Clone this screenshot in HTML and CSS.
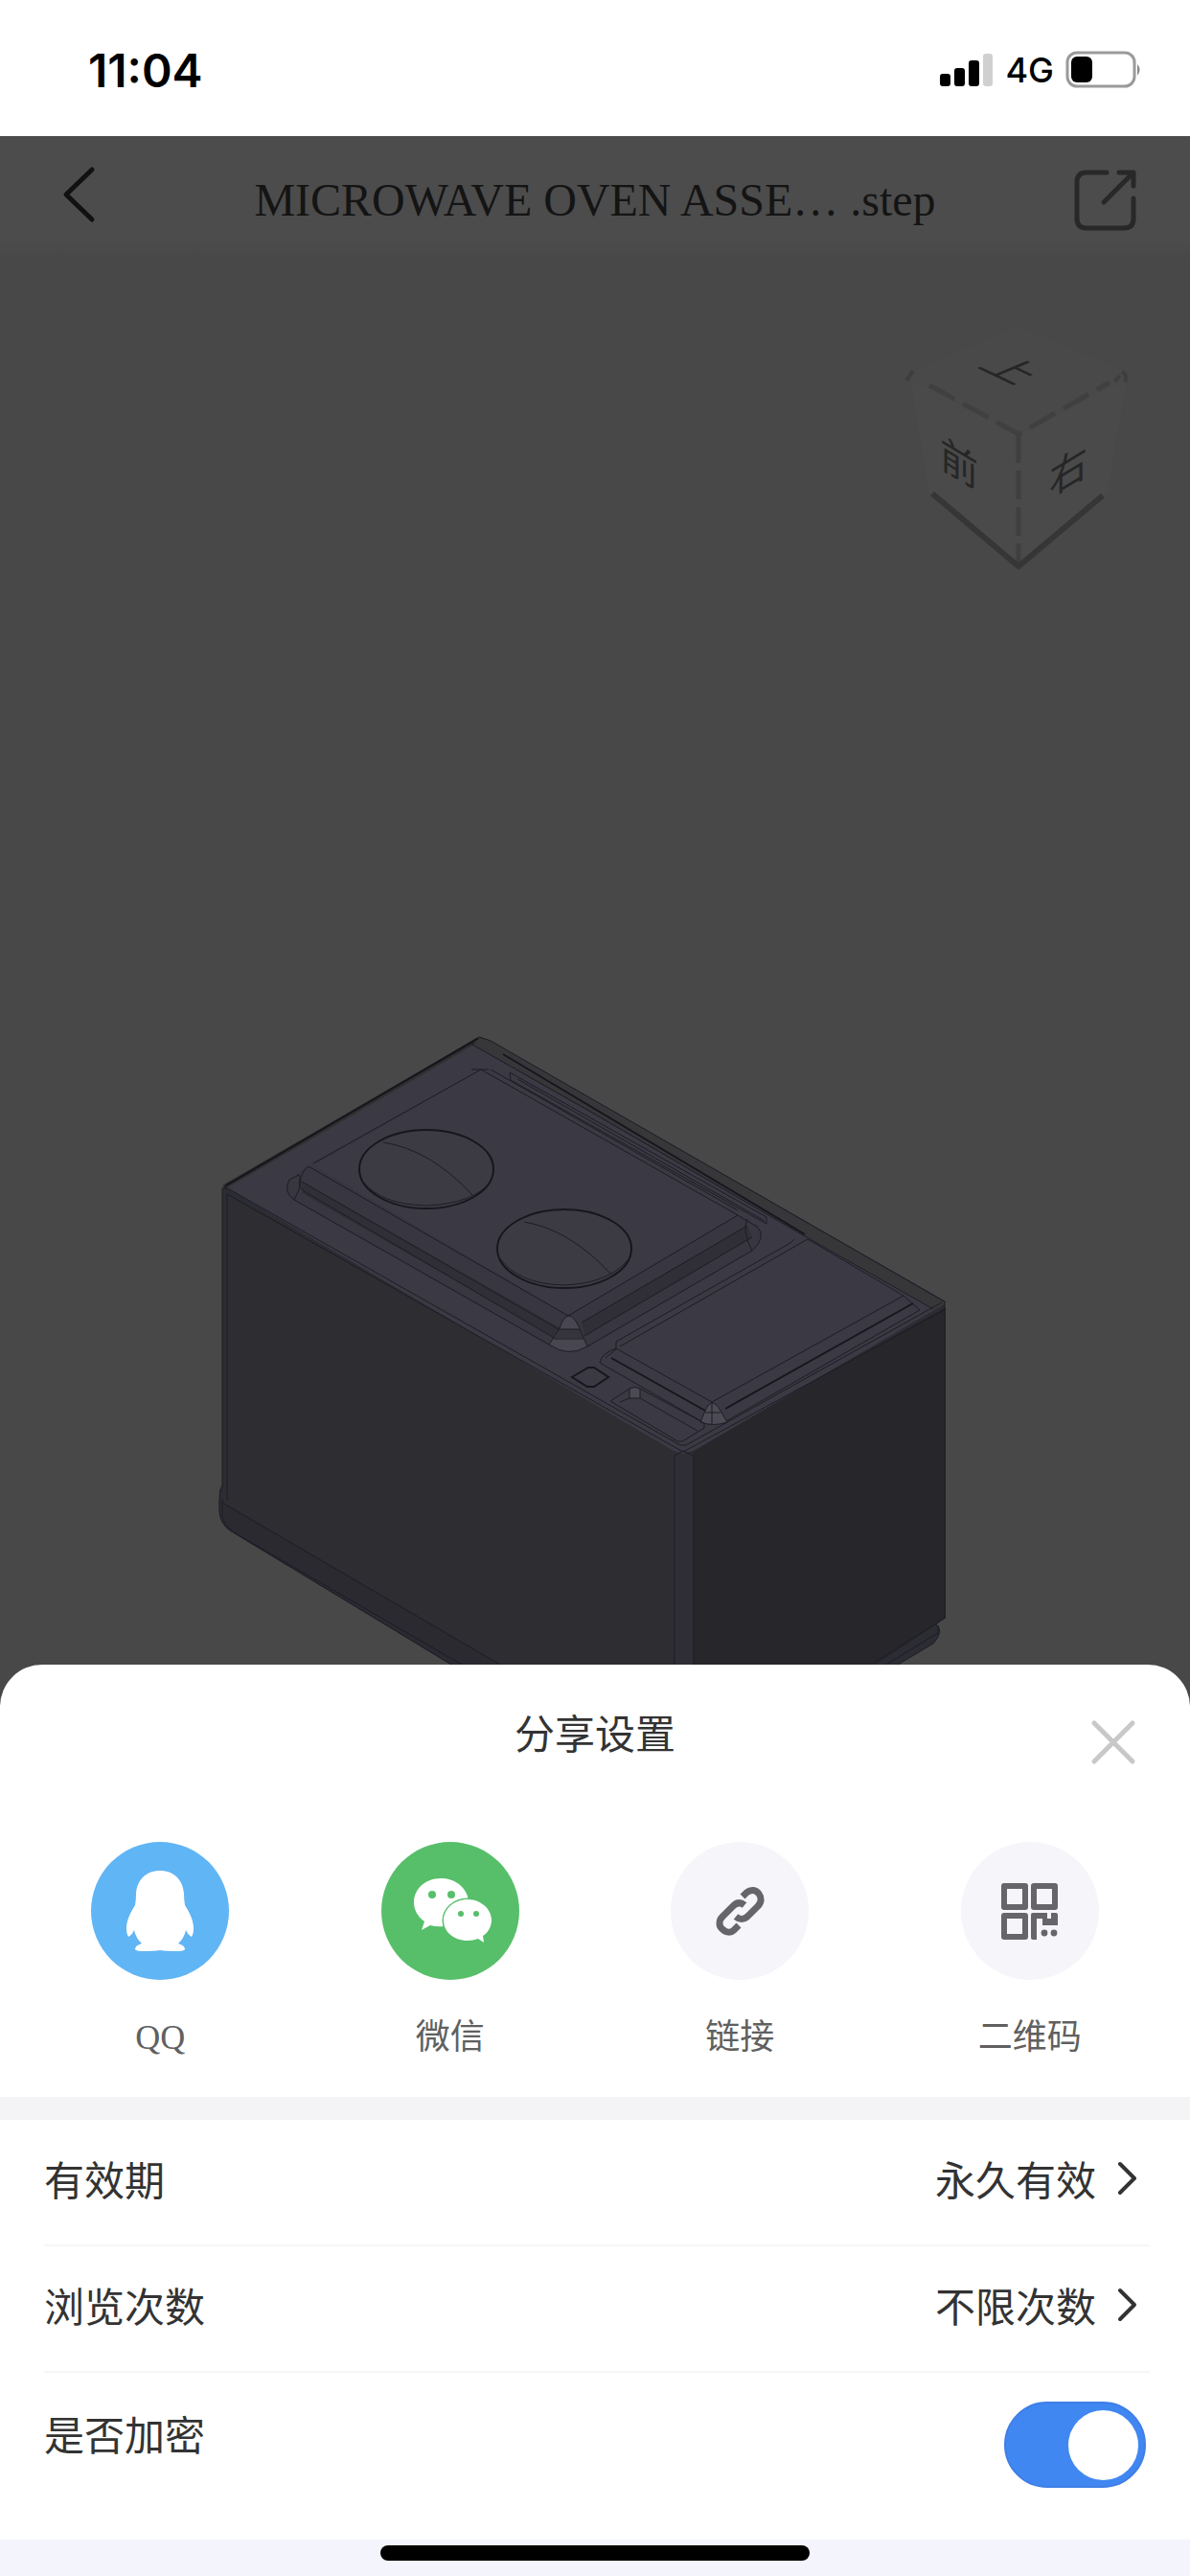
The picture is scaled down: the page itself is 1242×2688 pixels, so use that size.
FILE: index.html
```html
<!DOCTYPE html>
<html lang="zh-CN">
<head>
<meta charset="utf-8">
<meta name="viewport" content="width=device-width, initial-scale=1">
<title>分享设置</title>
<link rel="stylesheet" href="styles.css">
</head>
<body>
<div class="app">
  <div class="status">
    <span class="status-time">11:04</span>
    <div class="status-right">
      <svg class="signal" viewBox="0 0 56 36" aria-hidden="true">
        <rect x="0" y="22" width="11" height="13" rx="3"/>
        <rect x="15" y="16" width="11" height="19" rx="3"/>
        <rect x="30" y="8" width="11" height="27" rx="3"/>
        <rect x="45" y="1" width="10" height="34" rx="3" fill="#d0d0d0"/>
      </svg>
      <span class="status-net">4G</span>
      <svg class="battery" viewBox="0 0 80 40" aria-hidden="true">
        <rect x="2" y="2" width="70" height="35" rx="10" fill="none" stroke="#9a9a9a" stroke-width="3"/>
        <rect x="6" y="6" width="22" height="27" rx="6"/>
        <path d="M75 14q5 5 0 12z" fill="#8a8a8a"/>
      </svg>
    </div>
  </div>

  <main class="stage">
    <header class="topbar">
      <button class="icon-btn" type="button" aria-label="返回">
        <svg class="back" viewBox="0 0 36 60"><path d="M32 4 5 30l27 26" fill="none" stroke="#111" stroke-width="5" stroke-linecap="round" stroke-linejoin="round"/></svg>
      </button>
      <h1 class="file-name">MICROWAVE OVEN ASSE… .step</h1>
      <button class="icon-btn" type="button" aria-label="分享">
        <svg class="export" viewBox="0 0 68 68"><g fill="none" stroke="#282828" stroke-width="5" stroke-linecap="round" stroke-linejoin="round"><path d="M35 5H14Q4 5 4 15v38q0 10 10 10h39q10 0 10-10V32"/><path d="M32 36 61 7M48 5h15v14"/></g></svg>
      </button>
    </header>

    <svg class="model" viewBox="0 270 1242 1467" role="img" aria-label="微波炉三维模型">
      <g class="cube">
        <path d="M943 391 1063 340 1183 391 1063 453z" fill="#494949"/>
        <path d="M950 395 1063 453V592L970 514z M1176 395 1063 453V592L1156 514z" fill="#4a4a4a"/>
        <path d="M970 402 1063 453 1158 399" fill="none" stroke="#404040" stroke-width="5" stroke-dasharray="30 10"/>
        <path d="M1063 453V590" fill="none" stroke="#3f3f3f" stroke-width="5" stroke-dasharray="30 8"/>
        <path d="M973 515 1063 591 1151 517" fill="none" stroke="#363636" stroke-width="6" stroke-linejoin="round"/>
        <path d="m946 397 7-10M1163 398l6-6M1171 388q6 3 3 11" fill="none" stroke="#3e3e3e" stroke-width="4"/>
        <text class="face" transform="matrix(1.05 .5 -1.05 .44 1056 386)" y="15">上</text>
        <text class="face" transform="matrix(1 .6 0 1.05 1001 483)" y="15">前</text>
        <text class="face" transform="matrix(1 -.6 0 1.05 1115 491)" y="15">右</text>
      </g>

      <path d="M229 1555 232 1550V1240L500 1082 512 1086 986 1358V1688L977 1695Q985 1702 974 1715L937 1737H471L240 1597Q230 1590 229 1578z" fill="#2c2c33"/>
      <path d="M237 1246 713 1516V1737H471L240 1597 232 1568 237 1550z" fill="#2d2d32"/>
      <path d="M713 1516 987 1364V1688L914 1737H713z" fill="#26262b"/>
      <path d="M232 1568 522 1737H471L240 1597Q230 1590 232 1568z" fill="#2b2a31"/>
      <path d="M704 1516H724V1737H704z" fill="#2f2e36"/>
      <path d="M232 1237 500 1082 512 1086 987 1360 724 1514 713 1517 703 1514z" fill="#3b3943"/>
      <path d="M500 1082 512 1086 987 1360 975 1366 840 1290 493 1090z" fill="#37373a"/>
      <path d="M232 1237 500 1082 495 1090 238 1239z" fill="#30302f"/>

      <!-- raised hob panel -->
      <path d="M307 1252Q295 1243 302 1231L325 1214 502 1116 770 1268 790 1278Q801 1290 785 1305L613 1405Q593 1417 573 1403z" fill="#383640"/>
      <path d="M315 1233 587 1387 593 1396 580 1396 315 1245zM607 1380 780 1279 785 1291 610 1394z" fill="#302f38"/>
      <path d="M327 1216 502 1116 770 1268 593 1373z" fill="#3b3943"/>
      <path d="M584 1386Q593 1360 605 1386L613 1405Q593 1417 573 1403z" fill="#484650"/>
      <path d="M583 1387 605 1387 609 1396H579z" fill="#35343d"/>
      <ellipse cx="445" cy="1220" rx="70" ry="41" fill="#3c3b43"/>
      <ellipse cx="589" cy="1303" rx="70" ry="41" fill="#3c3b43"/>

      <!-- front corner facets of the small panel -->
      <path d="M736 1472Q743 1456 752 1472L759 1484Q744 1489 731 1484z" fill="#4c4a54"/>
      <path d="M657 1449Q662 1446 668 1449V1459H657z" fill="#4c4a54"/>

      <g class="edge">
        <path d="M232 1550V1240L500 1082 512 1086 986 1358V1688"/>
        <path d="M237 1550V1246L713 1515 987 1366"/>
        <path d="M234 1238 710 1508 716 1508 983 1359"/>
        <path d="M236 1242Q232 1236 240 1234L495 1087M493 1090 620 1162 840 1290 974 1366M493 1090Q492 1085 500 1084"/>
        <path d="M704 1737V1519L713 1514 724 1519V1737"/>
        <path d="M232 1550Q228 1556 229 1578 230 1590 240 1597L471 1737M232 1564V1582Q234 1592 244 1599L482 1737M232 1568 522 1737M237 1550V1566"/>
        <path d="M987 1688 914 1734M977 1695Q986 1702 974 1715L937 1737M979 1696V1704L925 1737"/>
        <path d="M327 1214 502 1116 770 1268 593 1373 327 1220Q320 1214 316 1224 308 1236 317 1243"/>
        <path d="M512 1116 770 1263M492 1116H510"/>
        <path d="M315 1233 583 1387M317 1243 580 1397M307 1252 573 1403Q593 1417 613 1405L785 1305Q801 1290 790 1280L770 1268"/>
        <path d="M307 1252Q295 1243 302 1231L312 1226Q318 1232 307 1252"/>
        <path d="M607 1380 780 1279M610 1394 785 1291M780 1272Q774 1285 785 1305"/>
        <path d="M573 1403 584 1386Q593 1360 605 1386L613 1405M583 1387H605M579 1397H609"/>
        <path d="M532 1119 800 1270V1277L533 1127z M540 1126 798 1274"/>
        <path d="M400 1192Q450 1200 493 1247M547 1275Q595 1283 638 1330"/>
        <path d="M643 1400 825 1297M647 1405 843 1293 943 1352 743 1463 643 1407Q628 1412 626 1422L732 1483"/>
        <path d="M825 1297 829 1293M943 1352 960 1367 758 1483M643 1400V1408L632 1417"/>
        <path d="M736 1472Q743 1456 752 1472L759 1484Q744 1489 731 1484zM736 1474H752M743 1463V1486"/>
        <path d="M637 1462 657 1449Q662 1446 668 1449L735 1485V1490L714 1503Q709 1506 704 1502zM647 1463 657 1459H668L728 1493M657 1449V1459M668 1449V1459"/>
      </g>
      <g class="edge edge-strong">
        <path d="M597 1437 614 1427H620L635 1437 620 1447H613z"/>
        <path d="M236 1237 498 1084M525 1100 840 1288"/>
        <path d="M638 1417 736 1472M757 1470 953 1360"/>
        <ellipse cx="445" cy="1220" rx="70" ry="41"/>
        <ellipse cx="589" cy="1303" rx="70" ry="41"/>
      </g>
      <path class="edge" d="M378 1232Q397 1257 445 1258 494 1256 512 1233M521 1312Q540 1340 589 1341 635 1339 655 1315"/>
    </svg>

    <section class="sheet" aria-labelledby="sheet-title">
      <div class="sheet-head">
        <h2 class="sheet-title" id="sheet-title">分享设置</h2>
        <button class="close" type="button" aria-label="关闭">
          <svg viewBox="0 0 48 48"><path d="M4 4 44 44M44 4 4 44" stroke="#c8c8c8" stroke-width="5" stroke-linecap="round"/></svg>
        </button>
      </div>

      <div class="targets">
        <button class="target" type="button">
          <svg class="target-icon" viewBox="0 0 144 144" aria-hidden="true">
            <circle cx="72" cy="72" r="72" fill="#60b5f5"/>
            <path d="M72 30C57 30 48 40 47 54Q47 60 46 66C41 74 37 82 37 90Q37 96 39 99 43 97 45 92 47 101 53 106 46 108 46 112 47 114 54 114 66 114 72 113 78 114 90 114 97 114 98 112 98 108 91 106 97 101 99 92 101 97 105 99 107 96 107 90C107 82 103 74 98 66Q97 60 97 54C96 40 87 30 72 30z" fill="#fff"/>
          </svg>
          <span class="target-label">QQ</span>
        </button>
        <button class="target" type="button">
          <svg class="target-icon" viewBox="0 0 144 144" aria-hidden="true">
            <circle cx="72" cy="72" r="72" fill="#57bf6a"/>
            <path d="M62 38C46 38 34 49 34 63 34 71 38 78 45 83L42 92 51 87Q58 89 66 88L91 60C88 46 76 38 62 38z" fill="#fff"/>
            <path d="M90 60C76 60 65 70 65 82S76 103 90 103Q96 103 101 101L107 105 106 98C112 94 115 88 115 82 115 70 104 60 90 60z" fill="#fff" stroke="#57bf6a" stroke-width="3" paint-order="stroke"/>
            <g fill="#57bf6a"><circle cx="53" cy="55" r="4"/><circle cx="73" cy="55" r="4"/><circle cx="83" cy="75" r="3"/><circle cx="99" cy="75" r="3"/></g>
          </svg>
          <span class="target-label">微信</span>
        </button>
        <button class="target" type="button">
          <svg class="target-icon" viewBox="0 0 144 144" aria-hidden="true">
            <circle cx="72" cy="72" r="72" fill="#f5f5fa"/>
            <g fill="none" stroke="#65656a" stroke-width="7"><path d="M75 57 79 53C84 49 89 50 92 54 95 58 95 63 91 67L80 78Q74 83 68 78"/><path d="M77 66Q71 61 65 67L54 78C50 82 50 88 54 91 58 95 63 95 66 92L71 87"/></g>
          </svg>
          <span class="target-label">链接</span>
        </button>
        <button class="target" type="button">
          <svg class="target-icon" viewBox="0 0 144 144" aria-hidden="true">
            <circle cx="72" cy="72" r="72" fill="#f5f5fa"/>
            <g fill="none" stroke="#65656a" stroke-width="6" stroke-linejoin="round"><rect x="45" y="46" width="22" height="22"/><rect x="76" y="46" width="22" height="22"/><rect x="45" y="77" width="22" height="22"/></g>
            <path d="M73 76Q73 74 75 74H90V80H94V74H99Q101 74 101 76V87H85V80H79V102H75Q73 102 73 100z" fill="#65656a"/>
            <g fill="#65656a"><circle cx="87" cy="95" r="3.4"/><circle cx="97" cy="95" r="3.4"/></g>
          </svg>
          <span class="target-label">二维码</span>
        </button>
      </div>

      <div class="settings">
        <div class="row">
          <span id="expiry">有效期</span>
          <button class="value" type="button" aria-describedby="expiry">永久有效
            <svg class="chevron" viewBox="0 0 22 36" aria-hidden="true"><path d="M3 3 18 18 3 33" fill="none" stroke="#333" stroke-width="4" stroke-linecap="round" stroke-linejoin="round"/></svg>
          </button>
        </div>
        <div class="row">
          <span id="views">浏览次数</span>
          <button class="value" type="button" aria-describedby="views">不限次数
            <svg class="chevron" viewBox="0 0 22 36" aria-hidden="true"><path d="M3 3 18 18 3 33" fill="none" stroke="#333" stroke-width="4" stroke-linecap="round" stroke-linejoin="round"/></svg>
          </button>
        </div>
        <div class="row row-last">
          <label for="encrypt">是否加密</label>
          <input class="switch" type="checkbox" role="switch" id="encrypt" checked>
        </div>
      </div>
      <div class="home"><span class="home-bar"></span></div>
    </section>
  </main>
</div>
</body>
</html>
```
FILE: styles.css
```css
* { box-sizing: border-box; }

body {
  margin: 0;
  background: #484848;
  color: #333;
  font-family: "Noto Sans CJK SC", sans-serif;
  font-size: 42px;
}

button {
  padding: 0;
  border: 0;
  background: none;
  color: inherit;
  font: inherit;
  cursor: pointer;
}

svg { display: block; }

.app {
  display: flex;
  flex-direction: column;
  min-height: 100vh;
}

/* status bar */
.status {
  display: flex;
  justify-content: space-between;
  align-items: center;
  height: 142px;
  padding: 4px 50px 0 92px;
  background: #fff;
  color: #000;
  font-family: Inter, sans-serif;
}

.status-time { font-size: 48px; font-weight: 600; }
.status-right { display: flex; align-items: center; gap: 12px; }
.status-net { font-size: 36px; font-weight: 500; }
.signal { width: 56px; height: 36px; }
.battery { width: 80px; height: 40px; }

/* model viewer */
.stage {
  display: flex;
  flex: 1;
  flex-direction: column;
}

.topbar {
  display: flex;
  justify-content: space-between;
  align-items: center;
  height: 128px;
  padding: 0 54px;
  background: linear-gradient(#4c4c4c 84%, #484848);
}

.file-name {
  margin: 0;
  padding-top: 4px;
  color: #141414;
  font-family: "Liberation Serif", serif;
  font-size: 48px;
  font-weight: 400;
  white-space: nowrap;
}

.icon-btn { width: 68px; }
.back { width: 36px; height: 60px; margin: 0 auto 6px 10px; }
.export { width: 68px; height: 68px; margin-top: 6px; }

.model { width: 100%; height: auto; margin-bottom: auto; }
.face { fill: #262626; font-size: 40px; text-anchor: middle; }
.edge { fill: none; stroke: #1d1c25; stroke-width: 1; }
.edge-strong { stroke: #17161e; stroke-width: 2; }

/* share sheet */
.sheet {
  overflow: hidden;
  border-radius: 44px 44px 0 0;
  background: #fff;
}

.sheet-head {
  display: grid;
  grid-template-columns: 1fr auto 1fr;
  align-items: start;
  padding: 38px 56px 0;
}

.sheet-title {
  grid-column: 2;
  margin: 0;
  font-size: 42px;
  font-weight: 400;
  line-height: 64px;
}

.close { justify-self: end; padding-top: 19px; }
.close svg { width: 48px; height: 48px; }

.targets {
  display: grid;
  grid-template-columns: repeat(4, 1fr);
  padding: 80px 16px 34px;
}

.target {
  display: flex;
  flex-direction: column;
  align-items: center;
  gap: 32px;
}

.target-icon { width: 144px; height: 144px; }

.target-label {
  color: #606060;
  font-family: "Liberation Serif", "Noto Sans CJK SC", serif;
  font-size: 36px;
  line-height: 56px;
}

.settings { border-top: 24px solid #f4f4f6; }

.row {
  display: flex;
  justify-content: space-between;
  align-items: flex-start;
  margin: 0 42px 0 46px;
  padding: 28px 12px 37px 0;
  border-bottom: 2px solid #f6f6f6;
  line-height: 65px;
}

.row-last { padding: 30px 4px 54px 0; border-bottom: 0; }

.value { display: flex; align-items: center; gap: 22px; }
.chevron { width: 22px; height: 36px; }

.switch {
  display: flex;
  justify-content: flex-end;
  align-items: center;
  width: 148px;
  height: 90px;
  margin: 0;
  padding: 0 6px;
  border: 2px solid #3f7fe6;
  border-radius: 45px;
  background: #4187f2;
  appearance: none;
}

.switch::before {
  width: 73px;
  height: 73px;
  border-radius: 50%;
  background: #fff;
  content: "";
}

.switch:not(:checked) {
  justify-content: flex-start;
  border-color: #ccc;
  background: #ccc;
}

.home {
  display: flex;
  justify-content: center;
  padding: 6px 0 18px;
  background: #f4f4fd;
}

.home-bar {
  width: 36%;
  height: 16px;
  border-radius: 8px;
  background: #000;
}
```
